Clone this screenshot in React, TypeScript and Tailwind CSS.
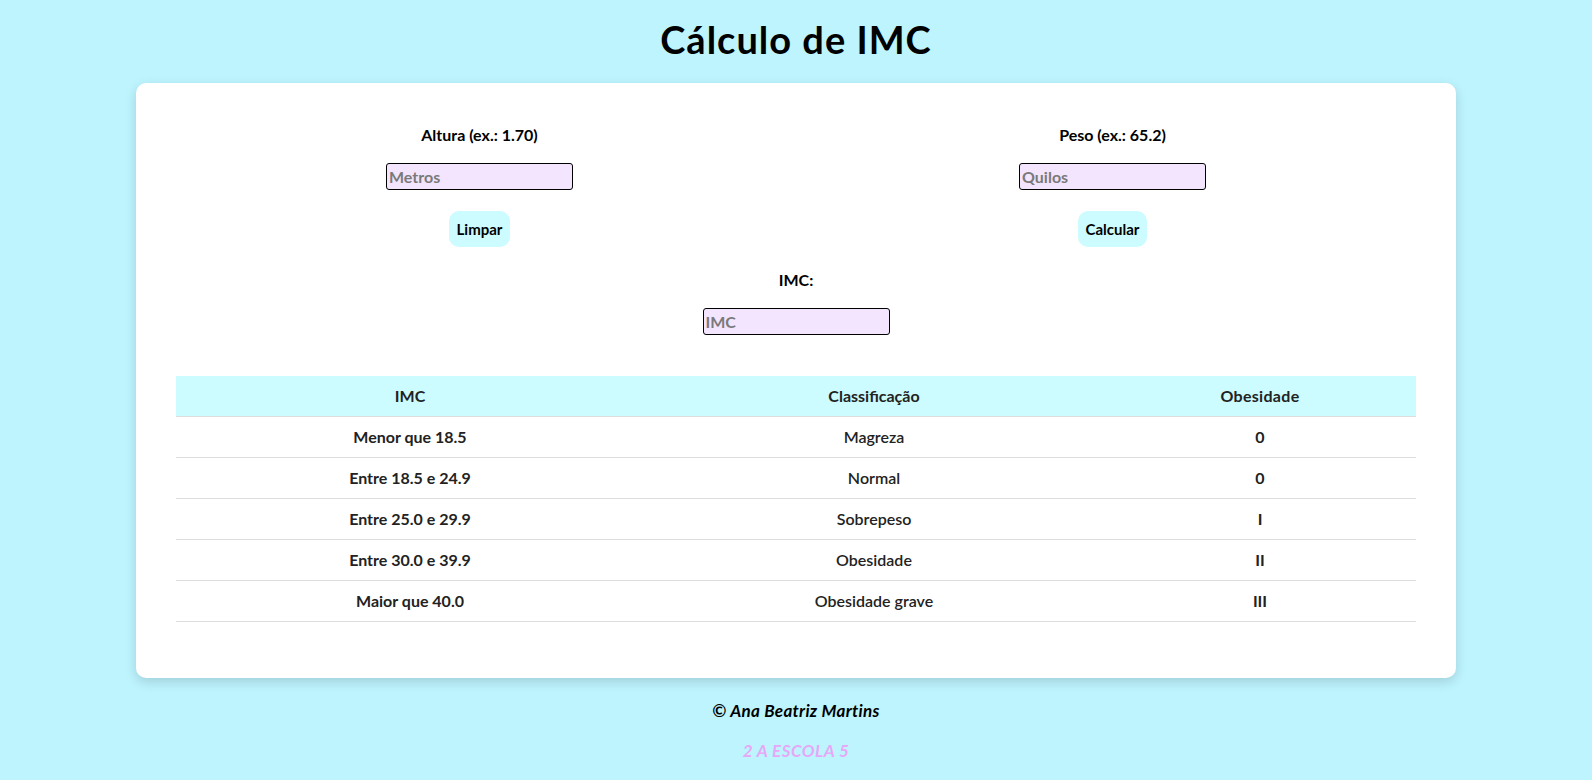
const rows = [
  { imc: "Menor que 18.5", cls: "Magreza", ob: "0" },
  { imc: "Entre 18.5 e 24.9", cls: "Normal", ob: "0" },
  { imc: "Entre 25.0 e 29.9", cls: "Sobrepeso", ob: "I" },
  { imc: "Entre 30.0 e 39.9", cls: "Obesidade", ob: "II" },
  { imc: "Maior que 40.0", cls: "Obesidade grave", ob: "III" },
];

function Field({ label, placeholder, button }: { label: string; placeholder: string; button?: string }) {
  return (
    <div className="flex flex-col items-center">
      <label className="text-[16px] font-bold leading-6 text-black">{label}</label>
      <input
        placeholder={placeholder}
        className="mt-4 h-[27px] w-[187px] rounded-[3px] border border-black bg-[#f3e5fe] px-0.5 text-[16px] font-bold text-black outline-none placeholder:text-[#7a7a7a]"
      />
      {button && (
        <button className="mt-[21px] h-9 rounded-[10px] bg-[#ccfcff] px-2 text-[15px] font-bold text-black">
          {button}
        </button>
      )}
    </div>
  );
}

export default function App() {
  return (
    <div className="min-h-[780px] bg-[#bdf4fe] pt-[17px] pb-4 font-['Lato','Liberation_Sans',sans-serif]">
      <h1 className="text-center text-[38px] font-bold leading-[44px] tracking-[1px] text-black">Cálculo de IMC</h1>

      <main className="mx-auto mt-[22px] w-[1320px] rounded-[10px] bg-white px-10 pt-10 pb-14 shadow-[0_4px_12px_rgba(0,0,0,0.15)]">
        <div className="grid grid-cols-2 gap-[26px]">
          <Field label="Altura (ex.: 1.70)" placeholder="Metros" button="Limpar" />
          <Field label="Peso (ex.: 65.2)" placeholder="Quilos" button="Calcular" />
        </div>

        <div className="mt-[21px]">
          <Field label="IMC:" placeholder="IMC" />
        </div>

        <table className="mt-[41px] w-full border-collapse text-[16px] font-bold text-[#222]">
          <thead>
            <tr className="bg-[#ccfcff]">
              <th className="w-[468px] border-b border-[#dddddd] py-2 leading-6">IMC</th>
              <th className="w-[460px] border-b border-[#dddddd] py-2 leading-6">Classificação</th>
              <th className="border-b border-[#dddddd] py-2 leading-6 tracking-[0.3px]">Obesidade</th>
            </tr>
          </thead>
          <tbody>
            {rows.map((r) => (
              <tr key={r.imc}>
                <td className="border-b border-[#dddddd] py-2 text-center leading-6">{r.imc}</td>
                <td className="border-b border-[#dddddd] py-2 text-center font-semibold leading-6">{r.cls}</td>
                <td className="border-b border-[#dddddd] py-2 text-center leading-6">{r.ob}</td>
              </tr>
            ))}
          </tbody>
        </table>
      </main>

      <footer className="mt-[21px] text-center">
        <p className="text-[17px] font-bold italic leading-6 tracking-[0.3px] text-black">© Ana Beatriz Martins</p>
        <p className="mt-4 text-[17px] font-bold italic uppercase leading-6 tracking-[0.5px] text-[#e6a8f7]">2 A Escola 5</p>
      </footer>
    </div>
  );
}
